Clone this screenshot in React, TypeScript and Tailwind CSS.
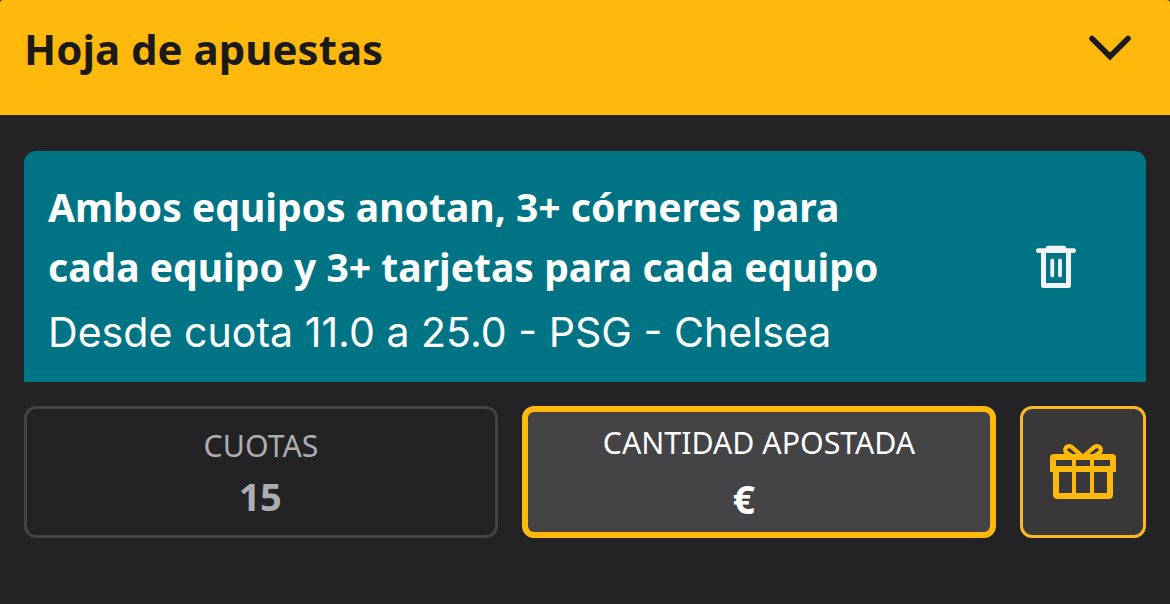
import type { ReactNode } from 'react'

interface Selection {
  title: string[]
  detail: string
}

const selection: Selection = {
  title: ['Ambos equipos anotan, 3+ córneres para', 'cada equipo y 3+ tarjetas para cada equipo'],
  detail: 'Desde cuota 11.0 a 25.0 - PSG - Chelsea',
}

function ChevronIcon() {
  return (
    <svg width="44" height="28" viewBox="0 0 44 28" fill="none" stroke="#1c1a17" strokeWidth="5.6" strokeLinecap="round">
      <path d="M4 4.5 22 22.5 40 4.5" />
    </svg>
  )
}

function TrashIcon() {
  return (
    <svg width="40" height="44" viewBox="0 0 40 44" fill="none" stroke="#f1f5f9">
      <path d="M2.4 5.7H37.6" strokeWidth="4.8" strokeLinecap="round" />
      <path d="M12 3H28" strokeWidth="4.6" strokeLinecap="round" />
      <path d="M7.5 6V40.5H32.5V6" strokeWidth="5" strokeLinejoin="round" />
      <path d="M16.3 15.5V30.5M24 15.5V30.5" strokeWidth="3.8" strokeLinecap="round" />
    </svg>
  )
}

function GiftIcon() {
  return (
    <svg width="66" height="58" viewBox="0 0 66 58" fill="none" stroke="#ffb80c">
      {/* bow */}
      <path d="M31.5 14.5 22.5 6.6C20.5 4.6 17.2 4.6 15.7 6.9C14.4 9 15.4 11.2 17.5 12.4L21 14.5" strokeWidth="4.2" />
      <path d="M34.5 14.5 43.5 6.6C45.5 4.6 48.8 4.6 50.3 6.9C51.6 9 50.6 11.2 48.5 12.4L45 14.5" strokeWidth="4.2" />
      {/* lid and box */}
      <path
        d="M4 13H62Q66 13 66 17V31H63V53.5Q63 58 58.5 58H7.5Q3 58 3 53.5V31H0V17Q0 13 4 13ZM6 19V25H22V19ZM26 19V25H40V19ZM44 19V25H60V19ZM9 31V52H22V31ZM26 31V52H40V31ZM44 31V52H57V31Z"
        fill="#ffb80c"
        fillRule="evenodd"
        stroke="none"
      />
    </svg>
  )
}

function Field({ label, className, children }: { label: string; className: string; children: ReactNode }) {
  return (
    <div className={`flex w-[474px] flex-col items-center rounded-xl ${className}`}>
      <span className="text-[30.3px] leading-10">{label}</span>
      {children}
    </div>
  )
}

export default function App() {
  return (
    <div className="h-[604px] w-[1170px] overflow-hidden bg-[#232325] font-['Noto_Sans',sans-serif]">
      {/* header */}
      <header className="flex h-[115px] items-start justify-between rounded-t-[3px] bg-[#ffb80c] pl-6 pr-[38px]">
        <h1 className="pt-[19px] text-[42px] leading-[60px] font-bold text-[#1c1a17]">Hoja de apuestas</h1>
        <button aria-label="Cerrar" className="pt-[34px]">
          <ChevronIcon />
        </button>
      </header>

      <main className="px-6 pt-9">
        <section className="flex h-[231px] items-center justify-between rounded-t-xl bg-[#007484] pl-6 pr-[70px]">
          <div className="pt-1.5 whitespace-nowrap text-white">
            {selection.title.map(line => (
              <p key={line} className="text-[39.05px] leading-[60px] font-bold">{line}</p>
            ))}
            <p className="pt-[5px] font-['Inter',sans-serif] text-[41.1px] leading-[60px]">{selection.detail}</p>
          </div>
          <button aria-label="Eliminar">
            <TrashIcon />
          </button>
        </section>

        {/* odds, stake and bonus */}
        <div className="mt-6 flex h-[132px] gap-6">
          <Field label="CUOTAS" className="border-3 border-[#434345] pt-[17px] text-[#adadb0]">
            <span className="pr-0.5 text-[38px] leading-[61px] font-bold tracking-[-0.5px]">15</span>
          </Field>
          <Field label="CANTIDAD APOSTADA" className="border-6 border-[#ffb80c] bg-[#444446] pt-[11px] text-white">
            <span className="pr-[30px] text-[39px] leading-[72px] font-bold">€</span>
          </Field>
          <button aria-label="Bono" className="flex w-[126px] items-center justify-center rounded-xl border-3 border-[#f8b824] bg-[#393738] pb-1">
            <GiftIcon />
          </button>
        </div>
      </main>
    </div>
  )
}
